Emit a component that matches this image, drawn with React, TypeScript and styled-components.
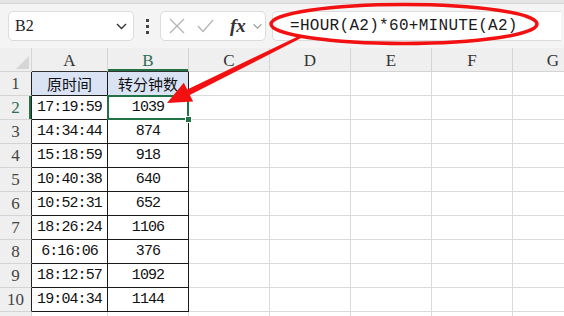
import styled, { createGlobalStyle } from 'styled-components'

const GlobalStyle = createGlobalStyle`
  html, body {
    margin: 0;
    padding: 0;
    background: #ffffff;
    overflow: hidden;
  }
`;

const rows = [
  ['原时间', '转分钟数'],
  ['17:19:59', '1039'],
  ['14:34:44', '874'],
  ['15:18:59', '918'],
  ['10:40:38', '640'],
  ['10:52:31', '652'],
  ['18:26:24', '1106'],
  ['6:16:06', '376'],
  ['18:12:57', '1092'],
  ['19:04:34', '1144'],
];

const cols = ['A', 'B', 'C', 'D', 'E', 'F', 'G'];
const GREEN = '#217346';

const Chevron = () => (
  <svg width="11" height="7" viewBox="0 0 11 7">
    <path d="M1 1 L5.5 5.5 L10 1" fill="none" stroke="currentColor" strokeWidth="1.4" />
  </svg>
);

const App = () => {
  return (
    <Page>
      <GlobalStyle />
      <FormulaBar>
        <TopEdge />
        <BarRow>
          <NameBox>
            <span className="name">B2</span>
            <Chevron />
          </NameBox>
          <Dots>
            <i /><i /><i />
          </Dots>
          <FuncBox>
            <svg width="16" height="16" viewBox="0 0 16 16">
              <path d="M1 1 L15 15 M15 1 L1 15" stroke="#b4b4b4" strokeWidth="1.3" fill="none" />
            </svg>
            <svg width="17" height="14" viewBox="0 0 17 14">
              <path d="M1 7 L6 12.5 L16 1" stroke="#b4b4b4" strokeWidth="1.3" fill="none" />
            </svg>
            <span className="fx">fx</span>
            <span className="more"><Chevron /></span>
          </FuncBox>
          <FormulaBox>
            <span>=HOUR(A2)*60+MINUTE(A2)</span>
          </FormulaBox>
        </BarRow>
      </FormulaBar>

      <Sheet>
        <Corner />
        {cols.map(c => (
          <ColHead key={c} $table={c === 'A' || c === 'B'} $active={c === 'B'}>{c}</ColHead>
        ))}
        {[...rows, null].map((r, i) => (
          <Row key={i} r={r} index={i} />
        ))}
      </Sheet>

      <Overlay width="564" height="316" viewBox="0 0 564 316">
        <ellipse cx="404" cy="24" rx="133" ry="19.5" fill="none" stroke="#f21010" strokeWidth="3.5" />
        <polygon
          points="299.3,35.7 187.2,89.6 183.8,82.8 167,103 193.2,101.6 189.8,95 300.7,38.3"
          fill="#f21010"
        />
      </Overlay>
    </Page>
  )
}

const Row = ({ r, index }: { r: string[] | null; index: number }) => {
  const n = index + 1;
  return (
    <>
      <RowHead $table={!!r} $active={n === 2}>{r ? n : ''}</RowHead>
      <Cell $table={!!r} $title={n === 1} $cjk={n === 1}>{r ? r[0] : ''}</Cell>
      <Cell $table={!!r} $title={n === 1} $cjk={n === 1} $selected={n === 2}>{r ? r[1] : ''}</Cell>
      {cols.slice(2).map(c => <Cell key={c} />)}
    </>
  )
}

const Page = styled.div`
  position: relative;
  width: 564px;
  height: 316px;
  overflow: hidden;
  background: #ffffff;
`;

const FormulaBar = styled.div`
  height: 48px;
  background-color: #f4f4f4;
`;

const TopEdge = styled.div`
  height: 3px;
  background-color: #e4e4e4;
  border-bottom: 1px solid #d6d6d6;
`;

const BarRow = styled.div`
  display: flex;
  align-items: center;
  padding: 7px 0 0 8px;
`;

const NameBox = styled.div`
  box-sizing: border-box;
  display: flex;
  align-items: center;
  justify-content: space-between;
  width: 126px;
  height: 30px;
  padding: 0 6px 0 6px;
  background-color: #ffffff;
  border: 1px solid #dcdcdc;
  border-radius: 5px;
  color: #333;

  .name {
    font-family: "Liberation Serif", serif;
    font-size: 16px;
    color: #222;
  }
`;

const Dots = styled.div`
  display: flex;
  flex-direction: column;
  align-items: center;
  gap: 3px;
  width: 26px;

  i {
    display: block;
    width: 3px;
    height: 3px;
    background-color: #444;
  }
`;

const FuncBox = styled.div`
  box-sizing: border-box;
  display: flex;
  align-items: center;
  width: 106px;
  height: 30px;
  padding: 0 0 0 8px;
  gap: 12px;
  background-color: #ffffff;
  border: 1px solid #dcdcdc;
  border-radius: 5px;

  .fx {
    margin-left: 4px;
    font-family: "Liberation Serif", serif;
    font-style: italic;
    font-weight: 700;
    font-size: 19px;
    color: #333;
  }

  .more {
    display: flex;
    margin-left: -6px;
    color: #999;
    transform: scale(0.85);
  }
`;

const FormulaBox = styled.div`
  box-sizing: border-box;
  flex: 1;
  display: flex;
  align-items: center;
  height: 30px;
  margin: 0 3px 0 6px;
  padding-left: 17px;
  background-color: #ffffff;
  border: 1px solid #dcdcdc;
  border-right: none;
  border-radius: 5px 0 0 5px;
  font-family: "Liberation Mono", monospace;
  font-size: 16px;
  letter-spacing: 0.3px;
  color: #1a1a1a;
`;

const Sheet = styled.div`
  display: grid;
  grid-template-columns: 32px 76px 81px 81px 81px 81px 81px 81px;
  grid-auto-rows: 24px;
  width: 594px;
`;

const headBase = `
  box-sizing: border-box;
  display: flex;
  align-items: center;
  justify-content: center;
  background-color: #efefef;
  border-right: 1px solid #d4d4d4;
  border-bottom: 1px solid #d4d4d4;
  font-family: "Liberation Serif", serif;
  font-size: 17px;
`;

const Corner = styled.div`
  ${headBase}
  position: relative;

  &::after {
    content: '';
    position: absolute;
    right: 2px;
    bottom: 2px;
    border-left: 13px solid transparent;
    border-bottom: 13px solid #d6d6d6;
  }
`;

const ColHead = styled.div<{ $table?: boolean; $active?: boolean }>`
  ${headBase}
  padding-top: 2px;
  color: ${p => (p.$active ? '#2b6e54' : '#333')};
  border-bottom-color: ${p => (p.$table ? '#333' : '#d4d4d4')};
  box-shadow: ${p => (p.$active ? `inset 0 -2px 0 ${GREEN}` : 'none')};
`;

const RowHead = styled.div<{ $table?: boolean; $active?: boolean }>`
  ${headBase}
  color: ${p => (p.$active ? '#2b6e54' : '#444')};
  border-right-color: ${p => (p.$table ? '#222' : '#d4d4d4')};
  box-shadow: ${p => (p.$active ? `inset -2px 0 0 ${GREEN}` : 'none')};
`;

const Cell = styled.div<{ $table?: boolean; $title?: boolean; $cjk?: boolean; $selected?: boolean }>`
  box-sizing: border-box;
  position: relative;
  display: flex;
  align-items: center;
  justify-content: center;
  background-color: ${p => (p.$title ? '#dae3f3' : '#ffffff')};
  border-right: 1px solid ${p => (p.$table ? '#1a1a1a' : '#dadada')};
  border-bottom: 1px solid ${p => (p.$table ? '#1a1a1a' : '#dadada')};
  font-family: ${p => (p.$cjk ? '"Noto Sans CJK SC", sans-serif' : '"Liberation Mono", monospace')};
  font-size: 15px;
  letter-spacing: ${p => (p.$cjk ? '0' : '-0.9px')};
  color: #111;

  ${p => p.$selected && `
    &::after {
      content: '';
      position: absolute;
      top: -1px;
      left: -1px;
      right: -1px;
      bottom: -1px;
      border: 2px solid ${GREEN};
    }
    &::before {
      content: '';
      position: absolute;
      right: -4px;
      bottom: -4px;
      width: 5px;
      height: 5px;
      background-color: ${GREEN};
      border: 1px solid #fff;
      z-index: 1;
    }
  `}
`;

const Overlay = styled.svg`
  position: absolute;
  top: 0;
  left: 0;
  pointer-events: none;
`;

export default App
